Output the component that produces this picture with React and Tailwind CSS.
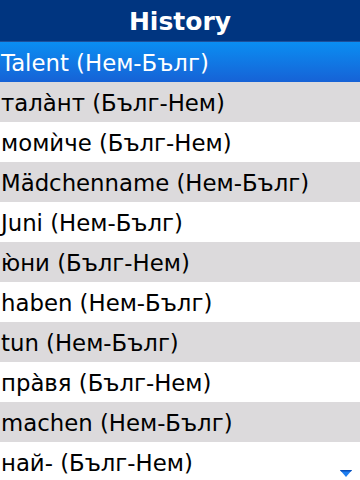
import React from "react";

const items = [
  "Talent (Нем-Бълг)",
  "тала̀нт (Бълг-Нем)",
  "момѝче (Бълг-Нем)",
  "Mädchenname (Нем-Бълг)",
  "Juni (Нем-Бълг)",
  "ю̀ни (Бълг-Нем)",
  "haben (Нем-Бълг)",
  "tun (Нем-Бълг)",
  "пра̀вя (Бълг-Нем)",
  "machen (Нем-Бълг)",
  "най- (Бълг-Нем)",
];

export default function App() {
  return (
    <div
      className="w-[360px] h-[480px] overflow-hidden bg-white flex flex-col relative"
      style={{ fontFamily: '"DejaVu Sans", "Noto Sans", sans-serif' }}
    >
      {/* header */}
      <div className="h-[42px] shrink-0 bg-[#003580] border-b border-[#1d4f9a] flex items-center justify-center pt-[2px]">
        <h1 className="text-white font-bold text-[25px] leading-none">History</h1>
      </div>

      <div className="flex flex-col">
        {items.map((t, i) => (
          <div
            key={i}
            className={
              i === 0
                ? "h-[40px] flex items-center bg-gradient-to-b from-[#0a8ef2] to-[#1662d6] text-white text-[22.8px] pl-[1px] pt-[2px]"
                : i % 2 === 1
                ? "h-[40px] flex items-center bg-[#dcdadc] text-black text-[22.8px] pl-[1px] pt-[2px]"
                : "h-[40px] flex items-center bg-white text-black text-[22.8px] pl-[1px] pt-[2px]"
            }
          >
            <span className="whitespace-nowrap">{t}</span>
          </div>
        ))}
      </div>

      {/* scroll indicator */}
      <svg className="absolute left-[340px] top-[470px]" width="12" height="7" viewBox="0 0 12 7">
        <polygon points="0,0 12,0 6,7" fill="#1e7ef0" />
        <polygon points="0,0 12,0 11,1.5 1,1.5" fill="#0a4fb8" />
      </svg>
    </div>
  );
}
